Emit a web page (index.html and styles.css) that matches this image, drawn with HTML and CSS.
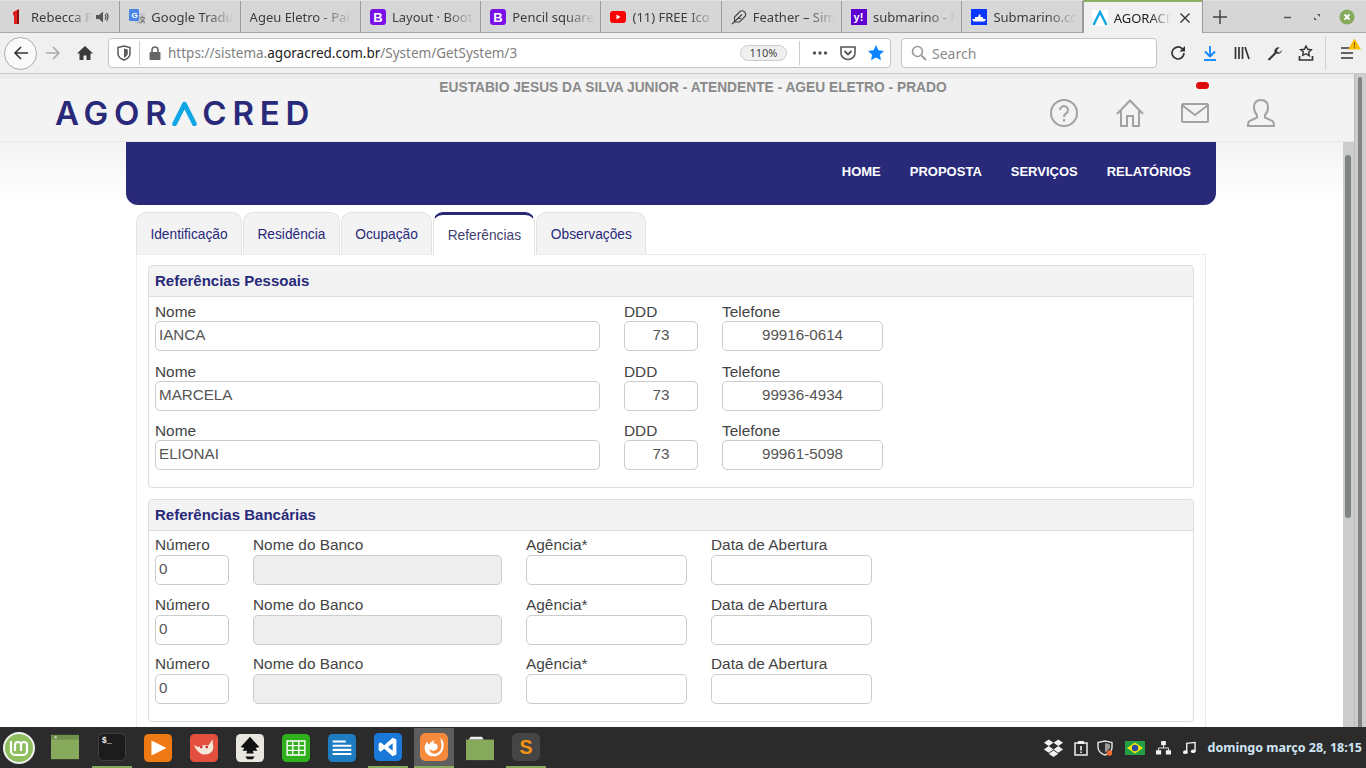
FILE: index.html
```html
<!DOCTYPE html>
<html lang="pt-BR">

<head>
    <meta charset="UTF-8">
    <title>AGORACRED</title>
    <link rel="stylesheet" href="styles.css">
</head>

<body>
    <div class="screen">
        <!-- abas do navegador -->
        <div class="tabstrip">
            <div class="tab">
                <svg class="fav" viewBox="0 0 16 16"><path d="M4 3l6-3v15H5V6l-1 .5z" fill="#e01f1f"/><path d="M8 1h2v14H8z" fill="#8c1010"/></svg>
                <span class="tab-title">Rebecca F</span>
                <svg class="tab-audio" viewBox="0 0 14 14"><path d="M1 5h3l4-3.500v11l-4-3.500H1z" fill="#555"/><path d="M10 4.500c1.200 1.500 1.200 3.500 0 5M11.500 3c2 2.200 2 5.800 0 8" fill="none" stroke="#555" stroke-width="1.200"/></svg>
            </div>
            <div class="tab">
                <svg class="fav" viewBox="0 0 16 16"><rect x="6" y="4" width="10" height="11" rx="1" fill="#c4c8cc"/><rect width="10" height="12" rx="1" fill="#4a86e8"/><text x="2.500" y="9" class="fav-g">G</text><text x="10" y="13" class="fav-z">文</text></svg>
                <span class="tab-title">Google Tradu</span>
            </div>
            <div class="tab">
                <span class="tab-title">Ageu Eletro - Pai</span>
            </div>
            <div class="tab">
                <svg class="fav" viewBox="0 0 16 16"><rect width="16" height="16" rx="3" fill="#7b10e8"/><text x="8" y="12.500" class="fav-b">B</text></svg>
                <span class="tab-title">Layout · Boot</span>
            </div>
            <div class="tab">
                <svg class="fav" viewBox="0 0 16 16"><rect width="16" height="16" rx="3" fill="#7b10e8"/><text x="8" y="12.500" class="fav-b">B</text></svg>
                <span class="tab-title">Pencil square</span>
            </div>
            <div class="tab">
                <svg class="fav" viewBox="0 0 16 16"><rect y="2" width="16" height="12" rx="3" fill="#f00"/><path d="M6.500 5.500l4 2.500-4 2.500z" fill="#fff"/></svg>
                <span class="tab-title">(11) FREE Ico</span>
            </div>
            <div class="tab">
                <svg class="fav" viewBox="0 0 16 16"><path d="M13.500 8a3.500 3.500 0 0 0-5-5L3.500 8v5h5zM11 5.500L1 15M10 9.500H6" fill="none" stroke="#444" stroke-width="1.100"/></svg>
                <span class="tab-title">Feather – Sim</span>
            </div>
            <div class="tab">
                <svg class="fav" viewBox="0 0 16 16"><rect width="16" height="16" fill="#5f01d1"/><text x="7.500" y="11.500" class="fav-y">y!</text></svg>
                <span class="tab-title">submarino - F</span>
            </div>
            <div class="tab">
                <svg class="fav" viewBox="0 0 16 16"><rect width="16" height="16" fill="#0a37ff"/><path d="M1 10h14l-1.500 2.500h-11zM4 10V8h3l1-2.500h1.500V8h2.500v2z" fill="#fff"/></svg>
                <span class="tab-title">Submarino.cc</span>
            </div>
            <div class="tab tab-active">
                <svg class="fav" viewBox="0 0 16 16"><rect width="16" height="16" fill="#fff"/><path d="M1.500 15L8 2l6.500 13" fill="none" stroke="#10a5e4" stroke-width="2.400"/></svg>
                <span class="tab-title">AGORACR</span>
                <svg class="tab-close" viewBox="0 0 12 12"><path d="M1.500 1.500l9 9M10.500 1.500l-9 9" stroke="#333" stroke-width="1.400"/></svg>
            </div>
            <svg class="tab-new" viewBox="0 0 14 14"><path d="M7 0v14M0 7h14" stroke="#444" stroke-width="1.500"/></svg>
            <div class="win-controls">
                <svg class="win-btn win-min" viewBox="0 0 10 10"><path d="M1 5.500h7" stroke="#555" stroke-width="1.500"/></svg>
                <svg class="win-btn" viewBox="0 0 10 10"><path d="M2 5v3h3zM8 5V2H5z" fill="#555"/></svg>
                <svg class="win-btn win-close" viewBox="0 0 16 16"><circle cx="8" cy="8" r="7.500" fill="#86aa5c"/><path d="M5.500 5.500l5 5M10.500 5.500l-5 5" stroke="#fff" stroke-width="1.800"/></svg>
            </div>
        </div>

        <!-- barra de ferramentas -->
        <div class="toolbar">
            <div class="btn-back">
                <svg class="ico" viewBox="0 0 16 16"><path d="M15 8H2M8 2L2 8l6 6" fill="none" stroke="#333" stroke-width="1.600"/></svg>
            </div>
            <svg class="ico ico-forward" viewBox="0 0 16 16"><path d="M1 8h13M8 2l6 6-6 6" fill="none" stroke="#aaa" stroke-width="1.600"/></svg>
            <svg class="ico ico-home" viewBox="0 0 16 16"><path d="M8 1L0 8.500h2.500V15h4v-4.500h3V15h4V8.500H16z" fill="#3a3a3a"/></svg>
            <div class="urlbar">
                <svg class="ico-url" viewBox="0 0 14 16"><path d="M1 2.500L7 1l6 1.500v6c0 3-3 5.500-6 6.500-3-1-6-3.500-6-6.500z" fill="none" stroke="#5a5a5a" stroke-width="1.500"/><path d="M7 3.500l3.800 1v4c0 1.800-1.800 3.300-3.800 4.200z" fill="#5a5a5a"/></svg>
                <span class="url-sep"></span>
                <svg class="ico-url" viewBox="0 0 14 16"><path d="M4 7V5a3 3 0 0 1 6 0v2" fill="none" stroke="#666" stroke-width="1.600"/><rect x="1.500" y="7" width="11" height="8" rx="1" fill="#666"/></svg>
                <span class="url-text">https://sistema.<b>agoracred.com.br</b>/System/GetSystem/3</span>
                <span class="url-zoom">110%</span>
                <span class="url-sep url-sep-wide"></span>
                <svg class="url-act" viewBox="0 0 16 16"><circle cx="2.500" cy="8" r="1.700" fill="#555"/><circle cx="8" cy="8" r="1.700" fill="#555"/><circle cx="13.500" cy="8" r="1.700" fill="#555"/></svg>
                <svg class="url-act" viewBox="0 0 16 16"><path d="M1 2h14v6a7 6.500 0 0 1-14 0z" fill="none" stroke="#555" stroke-width="1.600"/><path d="M4.500 6L8 9.500 11.500 6" fill="none" stroke="#555" stroke-width="1.800"/></svg>
                <svg class="url-act" viewBox="0 0 16 16"><path d="M8 0l2.400 5.200 5.600.7-4.100 3.800 1.100 5.600-5-2.800-5 2.800 1.100-5.600L0 5.900l5.600-.7z" fill="#0a84ff"/></svg>
            </div>
            <div class="searchbar">
                <svg class="ico-search" viewBox="0 0 16 16"><circle cx="6.500" cy="6.500" r="5" fill="none" stroke="#999" stroke-width="1.600"/><path d="M10.500 10.500L15 15" stroke="#999" stroke-width="1.800"/></svg>
                <span>Search</span>
            </div>
            <div class="tools">
                <svg class="ico" viewBox="0 0 16 16"><path d="M14 8a6 6 0 1 1-2-4.500L14 5" fill="none" stroke="#333" stroke-width="1.700"/><path d="M15 1v5.500H9.500z" fill="#333"/></svg>
                <svg class="ico" viewBox="0 0 16 16"><path d="M8 1v10M3 6.500L8 11.500l5-5" fill="none" stroke="#0a84ff" stroke-width="1.800"/><path d="M2 15h12" stroke="#0a84ff" stroke-width="1.800"/></svg>
                <svg class="ico" viewBox="0 0 16 16"><path d="M1.500 2v12M5 2v12M8.500 2v12M11 2l4 12" fill="none" stroke="#333" stroke-width="1.700"/></svg>
                <svg class="ico" viewBox="0 0 16 16"><path d="M1.500 14.500l7-7a4 4 0 0 1 5-5l-2.500 2.500.5 2 2 .5L16 5a4 4 0 0 1-5.500 3.500l-7 7z" fill="#3a3a3a"/></svg>
                <svg class="ico" viewBox="0 0 16 16"><path d="M8 1l1.700 3.300 3.600.5-2.600 2.500.6 3.500L8 8.700l-3.300 1.600.6-3.500L2.700 4.800l3.600-.5z" fill="none" stroke="#333" stroke-width="1.400"/><path d="M1.500 11v4h13v-4" fill="none" stroke="#333" stroke-width="1.700"/></svg>
                <span class="tools-sep"></span>
                <div class="menu-btn">
                    <svg class="ico" viewBox="0 0 16 16"><path d="M2 3h12M2 8h12M2 13h12" stroke="#333" stroke-width="1.600"/></svg>
                    <svg class="menu-alert" viewBox="0 0 14 12"><path d="M7 0l7 12H0z" fill="#ffbf00"/><path d="M7 4v4M7 9v1.500" stroke="#7a5a00" stroke-width="1.200"/></svg>
                </div>
            </div>
        </div>

        <!-- pagina -->
        <div class="page">
            <div class="page-main">
                <div class="page-strip"></div>
                <div class="page-header">
                    <div class="user-name">EUSTABIO JESUS DA SILVA JUNIOR - ATENDENTE - AGEU ELETRO - PRADO</div>
                    <div class="header-row">
                        <div class="logo">AGOR<span class="logo-a">A<svg class="logo-chevron" viewBox="0 0 24 24"><path d="M2.500 22L12 3l9.500 19" /></svg></span>CRED</div>
                        <div class="header-icons">
                            <svg class="hd-ico" viewBox="0 0 28 28"><circle cx="14" cy="14" r="13" /><path d="M10 11a4 4 0 1 1 6 3.500c-1.500.8-2 1.500-2 3.500" /><path d="M14 20v2.500" /></svg>
                            <svg class="hd-ico" viewBox="0 0 28 28"><path d="M1 15L14 1.500 27 15M5 12v15h6v-10h6v10h6V12" /></svg>
                            <div class="hd-mail">
                                <svg class="hd-ico" viewBox="0 0 28 28"><rect x="1" y="5" width="26" height="18" rx="1.500" /><path d="M1.500 6.500L14 16 26.500 6.500" /></svg>
                                <span class="mail-badge"></span>
                            </div>
                            <svg class="hd-ico" viewBox="0 0 28 28"><path d="M14 1c-4.500 0-7 3-7 7.500 0 3 1 5.500 3 7.500v2.500L2.500 22c-1.500 1-1.500 2.500-1.500 5h26c0-2.500 0-4-1.500-5L18 18.500V16c2-2 3-4.500 3-7.500C21 4 18.500 1 14 1z" /></svg>
                        </div>
                    </div>
                </div>
                <div class="page-body">
                    <div class="page-scroll">
                        <div class="container">
                            <nav class="mainnav">
                                <a>HOME</a>
                                <a>PROPOSTA</a>
                                <a>SERVIÇOS</a>
                                <a>RELATÓRIOS</a>
                            </nav>
                            <ul class="form-tabs">
                                <li>Identificação</li>
                                <li>Residência</li>
                                <li>Ocupação</li>
                                <li class="on">Referências</li>
                                <li>Observações</li>
                            </ul>
                            <div class="panel">
                                <section class="box">
                                    <h3 class="box-head">Referências Pessoais</h3>
                                    <div class="box-rows">
                                        <div class="row row-pessoal">
                                            <label>Nome<input type="text" value="IANCA"></label>
                                            <label>DDD<input class="mid" type="text" value="73"></label>
                                            <label>Telefone<input class="mid" type="text" value="99916-0614"></label>
                                        </div>
                                        <div class="row row-pessoal">
                                            <label>Nome<input type="text" value="MARCELA"></label>
                                            <label>DDD<input class="mid" type="text" value="73"></label>
                                            <label>Telefone<input class="mid" type="text" value="99936-4934"></label>
                                        </div>
                                        <div class="row row-pessoal">
                                            <label>Nome<input type="text" value="ELIONAI"></label>
                                            <label>DDD<input class="mid" type="text" value="73"></label>
                                            <label>Telefone<input class="mid" type="text" value="99961-5098"></label>
                                        </div>
                                    </div>
                                </section>
                                <section class="box">
                                    <h3 class="box-head">Referências Bancárias</h3>
                                    <div class="box-rows">
                                        <div class="row row-banco">
                                            <label>Número<input type="text" value="0"></label>
                                            <label>Nome do Banco<input type="text" disabled></label>
                                            <label>Agência*<input type="text"></label>
                                            <label>Data de Abertura<input type="text"></label>
                                        </div>
                                        <div class="row row-banco">
                                            <label>Número<input type="text" value="0"></label>
                                            <label>Nome do Banco<input type="text" disabled></label>
                                            <label>Agência*<input type="text"></label>
                                            <label>Data de Abertura<input type="text"></label>
                                        </div>
                                        <div class="row row-banco">
                                            <label>Número<input type="text" value="0"></label>
                                            <label>Nome do Banco<input type="text" disabled></label>
                                            <label>Agência*<input type="text"></label>
                                            <label>Data de Abertura<input type="text"></label>
                                        </div>
                                    </div>
                                </section>
                            </div>
                        </div>
                    </div>
                    <div class="track track-inner"><div class="thumb"></div></div>
                </div>
            </div>
            <div class="track track-outer"><div class="thumb"></div></div>
        </div>

        <!-- painel do sistema -->
        <div class="taskbar">
            <svg class="mint" viewBox="0 0 32 32"><circle cx="16" cy="16" r="15" fill="#8fbf5f" stroke="#f2f2f2" stroke-width="2"/><path d="M8 9v10a4 4 0 0 0 4 4h8a4 4 0 0 0 4-4v-6a3 3 0 0 0-6 0v6M12 19v-6a3 3 0 0 1 6 0" fill="none" stroke="#fff" stroke-width="2.200"/></svg>
            <div class="launchers">
                <div class="launcher">
                    <svg class="app app-win" viewBox="0 0 30 30"><rect y="1" width="30" height="26" fill="#87a95c"/><rect y="1" width="30" height="5" fill="#6f8f4a"/><rect x="4" y="2.500" width="2" height="2" fill="#ddd"/></svg>
                </div>
                <div class="launcher open">
                    <svg class="app" viewBox="0 0 30 30"><rect x=".5" y=".5" width="29" height="29" rx="5" fill="#1c1c1c" stroke="#444"/><text x="4" y="11" class="app-term">$_</text></svg>
                </div>
                <div class="launcher">
                    <svg class="app" viewBox="0 0 30 30"><rect width="30" height="30" rx="5" fill="#ef7a15"/><path d="M8 7l16 8-16 8z" fill="#fff"/></svg>
                </div>
                <div class="launcher">
                    <svg class="app" viewBox="0 0 30 30"><rect width="30" height="30" rx="5" fill="#e4503f"/><path d="M4 12l5 2 5-2 6 0 4-6 1 8c0 5-4 8-9 8s-8-3-12-10z" fill="#f5e6d8"/><circle cx="12" cy="14" r="1.500" fill="#c33"/><circle cx="18" cy="14" r="1.500" fill="#c33"/></svg>
                </div>
                <div class="launcher">
                    <svg class="app" viewBox="0 0 30 30"><rect width="30" height="30" rx="5" fill="#e9e6df"/><path d="M15 3L5 14l4 1-2 3h5l-1 3h8l-1-3h5l-2-3 4-1z" fill="#111"/><path d="M10 24h10l-2 3h-6z" fill="#111"/></svg>
                </div>
                <div class="launcher">
                    <svg class="app" viewBox="0 0 30 30"><rect width="30" height="30" rx="5" fill="#2fb01c"/><path d="M5.500 7.500h19v15h-19zM5.500 12.500h19M5.500 17.500h19M11.500 7.500v15M18 7.500v15" fill="none" stroke="#fff" stroke-width="1.500"/></svg>
                </div>
                <div class="launcher">
                    <svg class="app" viewBox="0 0 30 30"><rect width="30" height="30" rx="5" fill="#1d7dc0"/><path d="M5 8h14M5 12.500h20M5 17h20M5 21.500h20" stroke="#fff" stroke-width="2.200"/></svg>
                </div>
                <div class="launcher open">
                    <svg class="app" viewBox="0 0 30 30"><rect width="30" height="30" rx="5" fill="#1a78d8"/><path d="M20 5l4 2v16l-4 2-9-8-4 3-2-1.500v-7L7 10l4 3zM20 11l-5 4 5 4z" fill="#fff" fill-rule="evenodd"/></svg>
                </div>
                <div class="launcher open active">
                    <svg class="app" viewBox="0 0 30 30"><rect width="30" height="30" rx="6" fill="#f58a3c"/><path d="M22 5c3 3 4 6 3 11-1 6-6 9-11 9-5 0-9-4-9-9 0-3 1-5 3-7 0 2 1 3 2 3 1-2 3-4 6-4-1 1-2 2-2 3 3 0 5 1 5 4 0 2-2 4-5 4-2 0-3-1-4-2 0 3 3 6 7 5 4-1 6-4 6-8 0-3-1-6-1-9z" fill="#fff"/></svg>
                </div>
                <div class="launcher">
                    <svg class="app" viewBox="0 0 30 30"><path d="M0 6h30v22H0z" fill="#87a95c"/><path d="M3 6l2-3h12l2 3z" fill="#eee"/></svg>
                </div>
                <div class="launcher open">
                    <svg class="app" viewBox="0 0 30 30"><rect width="30" height="30" rx="6" fill="#454545"/><text x="15" y="23" class="app-sub">S</text></svg>
                </div>
            </div>
            <div class="tray">
                <svg class="tray-ico tray-drop" viewBox="0 0 22 20"><path d="M6 1l5 3.500L6 8 1 4.500zM16 1l5 3.500L16 8l-5-3.500zM6 8l5 3.500L6 15l-5-3.500zM16 8l5 3.500-5 3.500-5-3.500zM11 12.500l5 3.500-5 3.500L6 16z" fill="#f2f2f2"/></svg>
                <svg class="tray-ico tray-clip" viewBox="0 0 14 16"><path d="M1 3h12v12H1z" fill="none" stroke="#eee" stroke-width="1.500"/><rect x="4" y="1" width="6" height="3" fill="#eee"/><path d="M7 6v4.500M7 11.500V13" stroke="#eee" stroke-width="1.600"/></svg>
                <svg class="tray-ico tray-shield" viewBox="0 0 16 16"><path d="M1 2.500L8 1l7 1.500v5c0 3.500-3.500 6.500-7 7.500-3.500-1-7-4-7-7.500z" fill="none" stroke="#ddd" stroke-width="1.500"/><path d="M8 3l5 1.200V8L8 13z" fill="#999"/><circle cx="12.500" cy="13" r="2.700" fill="#f26a2e"/></svg>
                <svg class="tray-ico tray-flag" viewBox="0 0 20 14"><rect width="20" height="14" fill="#229e45"/><path d="M10 1.500L18 7l-8 5.500L2 7z" fill="#f8e509"/><circle cx="10" cy="7" r="3.200" fill="#2b49a3"/></svg>
                <svg class="tray-ico tray-net" viewBox="0 0 16 16"><path d="M5.500 1h5v4.500h-5zM0 11h5.500v4.500H0zM10.500 11H16v4.500h-5.500z" fill="#f2f2f2"/><path d="M8 5.500V8.500M2.700 11V8.500h10.600V11" fill="none" stroke="#f2f2f2"/></svg>
                <svg class="tray-ico tray-music" viewBox="0 0 14 14"><path d="M4 11.500V2l9-1v9.500" fill="none" stroke="#f2f2f2" stroke-width="1.500"/><ellipse cx="2.500" cy="11.500" rx="2.500" ry="2" fill="#f2f2f2"/><ellipse cx="11" cy="10.500" rx="2.500" ry="2" fill="#f2f2f2"/></svg>
                <span class="clock">domingo março 28, 18:15</span>
            </div>
        </div>
    </div>
</body>

</html>
```
FILE: styles.css
```css
* {
    box-sizing: border-box;
}

body {
    margin: 0;
    overflow: hidden;
}

.screen {
    width: 1366px;
    height: 768px;
    display: flex;
    flex-direction: column;
    font-family: "Noto Sans", sans-serif;
}

/* abas */
.tabstrip {
    height: 33px;
    flex: none;
    display: flex;
    align-items: stretch;
    background: #d6d6d6;
    border-top: 1px solid #e2e2e2;
    border-bottom: 1px solid #a8a8a8;
}

.tab {
    width: 120.3px;
    flex: none;
    display: flex;
    align-items: center;
    gap: 6px;
    padding-left: 9px;
    padding-right: 2px;
    border-right: 1px solid #9c9c9c;
    font-size: 13px;
    color: #3c3c3c;
}

.tab-title {
    flex: 1;
    min-width: 0;
    white-space: nowrap;
    overflow: hidden;
    -webkit-mask-image: linear-gradient(to right, #000 62%, transparent 96%);
    mask-image: linear-gradient(to right, #000 62%, transparent 96%);
}

.fav {
    width: 16px;
    height: 16px;
    flex: none;
}

.fav-g {
    font: bold 8px "Liberation Sans", sans-serif;
    fill: #fff;
}

.fav-z {
    font: 7px "Noto Sans CJK SC", sans-serif;
    fill: #555;
}

.fav-b {
    font: bold 13px "Liberation Sans", sans-serif;
    fill: #fff;
    text-anchor: middle;
}

.fav-y {
    font: bold 11px "Liberation Sans", sans-serif;
    fill: #fff;
    text-anchor: middle;
}

.tab-audio {
    width: 14px;
    height: 14px;
    flex: none;
    margin-left: -6px;
    margin-right: 8px;
}

.tab-active {
    margin-top: -1px;
    margin-bottom: -1px;
    background: #f0f0f0;
    border-top: 2px solid #8fae66;
    border-left: 1px solid #9c9c9c;
    color: #222;
    padding-left: 8px;
    padding-right: 11px;
    width: 120px;
}

.tab-close {
    width: 12px;
    height: 12px;
    flex: none;
}

.tab-new {
    width: 14px;
    height: 14px;
    align-self: center;
    margin-left: 10px;
}

.win-controls {
    margin-left: auto;
    display: flex;
    align-items: center;
    gap: 17px;
    padding-right: 11px;
}

.win-btn {
    width: 10px;
    height: 10px;
}

.win-min {
    margin-right: 2px;
}

.win-close {
    width: 16px;
    height: 16px;
}

/* barra */
.toolbar {
    height: 40px;
    flex: none;
    display: flex;
    align-items: center;
    background: #f0f0f0;
    padding-left: 4px;
}

.ico {
    width: 16px;
    height: 16px;
    flex: none;
}

.btn-back {
    width: 33px;
    height: 33px;
    border: 1px solid #aaa;
    border-radius: 50%;
    background: #fafafa;
    display: flex;
    align-items: center;
    justify-content: center;
}

.ico-forward {
    margin-left: 8px;
}

.ico-home {
    margin-left: 16px;
}

.urlbar {
    width: 783px;
    height: 30px;
    margin-left: 15px;
    display: flex;
    align-items: center;
    background: #fff;
    border: 1px solid #c4c4c4;
    border-radius: 4px;
    padding-left: 8px;
    padding-right: 6px;
}

.ico-url {
    width: 14px;
    height: 16px;
    flex: none;
}

.url-sep {
    width: 1px;
    height: 24px;
    background: #ccc;
    margin: 0 8px;
    flex: none;
}

.url-sep-wide {
    margin: 0 12px;
}

.url-text {
    flex: 1;
    margin-left: 6px;
    font-size: 13.5px;
    color: #808080;
    white-space: nowrap;
}

.url-text b {
    font-weight: normal;
    color: #222;
}

.url-zoom {
    width: 47px;
    height: 16px;
    border: 1px solid #ccc;
    border-radius: 8px;
    background: #f0f0f0;
    font-size: 11px;
    line-height: 14px;
    text-align: center;
    color: #444;
}

.url-act {
    width: 16px;
    height: 16px;
    margin-right: 12px;
    flex: none;
}

.url-act:last-child {
    margin-right: 0;
}

.searchbar {
    width: 256px;
    height: 30px;
    margin-left: 10px;
    display: flex;
    align-items: center;
    gap: 5px;
    background: #fff;
    border: 1px solid #c4c4c4;
    border-radius: 4px;
    padding-left: 9px;
    font-size: 14px;
    color: #8a8a8a;
}

.ico-search {
    width: 16px;
    height: 16px;
}

.tools {
    display: flex;
    align-items: center;
    gap: 16px;
    margin-left: 13px;
}

.tools-sep {
    width: 1px;
    height: 34px;
    background: #d4d4d4;
    margin-left: -5px;
    margin-right: -3px;
}

.menu-btn {
    position: relative;
    display: flex;
}

.menu-alert {
    position: absolute;
    left: 9px;
    top: -7px;
    width: 13px;
    height: 12px;
}

/* pagina */
.page {
    flex: 1;
    min-height: 0;
    display: flex;
    overflow: hidden;
    border-top: 1px solid #c8c8c8;
    font-family: "Liberation Sans", Arial, sans-serif;
}

.page-main {
    width: 1354px;
    flex: none;
    display: flex;
    flex-direction: column;
    min-height: 0;
}

.page-strip {
    height: 5px;
    flex: none;
    background: #ececec;
}

.page-header {
    height: 63px;
    flex: none;
    background: #f3f3f3;
    border-bottom: 1px solid #e8e8e8;
}

.user-name {
    height: 16px;
    padding-top: 1px;
    padding-left: 32px;
    text-align: center;
    font-size: 13.75px;
    font-weight: bold;
    line-height: 16px;
    color: #8a8a8a;
}

.header-row {
    display: flex;
    align-items: flex-start;
    justify-content: space-between;
    padding: 0 79px 0 55px;
}

.logo {
    font-family: Inter, sans-serif;
    font-size: 33px;
    font-weight: 600;
    line-height: 34px;
    letter-spacing: 5.8px;
    color: #29297a;
    margin-top: 1px;
}

.logo-a {
    position: relative;
    color: transparent;
}

.logo-chevron {
    position: absolute;
    left: -1px;
    top: 8px;
    width: 25px;
    height: 25px;
    fill: none;
    stroke: #10a5e4;
    stroke-width: 4.5;
    stroke-linecap: round;
    stroke-linejoin: round;
}

.header-icons {
    display: flex;
    gap: 37.7px;
    padding-top: 4px;
}

.hd-ico {
    width: 28px;
    height: 28px;
    display: block;
    fill: none;
    stroke: #a2a2a2;
    stroke-width: 2;
}

.hd-mail {
    position: relative;
}

.mail-badge {
    position: absolute;
    left: 15px;
    top: -17px;
    width: 13px;
    height: 7px;
    border-radius: 4px;
    background: #dc0a0a;
}

.page-body {
    flex: 1;
    min-height: 0;
    display: flex;
}

.page-scroll {
    width: 1343px;
    flex: none;
    overflow: hidden;
    background: linear-gradient(#f3f3f3, #fff 60px);
}

.track {
    background: #cccccc;
}

.thumb {
    background: #7f8484;
    border-radius: 3px;
}

.track-inner {
    width: 11px;
    flex: none;
    padding: 13px 3px 0 2px;
}

.track-inner .thumb {
    height: 363px;
}

.track-outer {
    width: 12px;
    flex: none;
    padding: 3px 4px 0 3px;
    border-left: 1px solid #bdbdbd;
}

.track-outer .thumb {
    height: 700px;
}

.container {
    width: 1090px;
    margin-left: 126px;
}

.mainnav {
    height: 63px;
    display: flex;
    align-items: center;
    justify-content: flex-end;
    gap: 29px;
    padding: 0 25px 5px 0;
    background: #29297a;
    border-radius: 0 0 12px 12px;
}

.mainnav a {
    font-size: 13px;
    font-weight: bold;
    color: #fff;
}

.form-tabs {
    display: flex;
    gap: 1px;
    list-style: none;
    margin: 7px 0 0 10px;
    padding: 0;
    height: 42px;
}

.form-tabs li {
    padding: 13px 13.4px 0;
    background: #f3f3f3;
    border: 1px solid #e3e3e3;
    border-bottom: 0;
    border-radius: 10px 10px 0 0;
    font-size: 13.75px;
    line-height: 17px;
    color: #29297a;
}

.form-tabs li.on {
    height: 43px;
    position: relative;
    z-index: 1;
    background: #fff;
    border-top: 3px solid #29297a;
    color: #3f3f6f;
    padding-top: 12px;
}

.panel {
    margin: 0 10px;
    padding: 10px 11px;
    background: #fff;
    border: 1px solid #ececec;
}

.box {
    border: 1px solid #ddd;
    border-radius: 4px;
    margin-bottom: 11px;
}

.box-head {
    height: 31px;
    margin: 0;
    padding-left: 6px;
    background: #f3f3f3;
    border-bottom: 1px solid #ddd;
    border-radius: 4px 4px 0 0;
    font-size: 15px;
    line-height: 30px;
    color: #29297a;
}

.box-rows {
    display: flex;
    flex-direction: column;
    gap: 12.5px;
    padding: 7px 6px 17px;
}

.row {
    display: grid;
    column-gap: 24px;
}

.row-pessoal {
    grid-template-columns: 445px 74px 161px;
}

.row-banco {
    grid-template-columns: 74px 249px 161px 161px;
}

.row label {
    display: block;
    font-size: 15.4px;
    line-height: 15px;
    color: #444;
}

.row-banco label {
    line-height: 14px;
}

.row input {
    display: block;
    width: 100%;
    height: 30px;
    margin-top: 2px;
    padding: 0 3px 3px;
    border: 1px solid #ccc;
    border-radius: 5px;
    background: #fff;
    font: 15.2px "Liberation Sans", Arial, sans-serif;
    color: #555;
}

.row-banco input {
    margin-top: 3px;
}

.row input.mid {
    text-align: center;
}

.row input:disabled {
    background: #eeeeee;
}

/* painel */
.taskbar {
    height: 41px;
    flex: none;
    display: flex;
    background: #2b2b2b;
}

.mint {
    width: 32px;
    height: 32px;
    margin: 5px 0 0 3px;
    flex: none;
}

.launchers {
    display: flex;
    gap: 6px;
    margin-left: 11px;
}

.launcher {
    width: 40px;
    display: flex;
    align-items: center;
    justify-content: center;
    margin-top: 1px;
}

.launcher.open {
    border-bottom: 2px solid #87a95c;
}

.launcher.active {
    background: #5e5e5e;
}

.app {
    width: 28px;
    height: 28px;
}

.app-win {
    margin-right: 3px;
}

.app-term {
    font: bold 9px "Liberation Mono", monospace;
    fill: #eee;
}

.app-sub {
    font: bold 21px "Liberation Sans", sans-serif;
    fill: #f4930e;
    text-anchor: middle;
}

.tray {
    margin-left: auto;
    display: flex;
    align-items: center;
    padding-right: 4px;
}

.tray-ico {
    flex: none;
}

.tray-drop {
    width: 21px;
    height: 20px;
}

.tray-clip {
    width: 14px;
    height: 16px;
    margin-left: 10px;
}

.tray-shield {
    width: 16px;
    height: 16px;
    margin-left: 9px;
}

.tray-flag {
    width: 20px;
    height: 14px;
    margin-left: 12px;
}

.tray-net {
    width: 15px;
    height: 15px;
    margin-left: 11px;
}

.tray-music {
    width: 13px;
    height: 14px;
    margin-left: 12px;
}

.clock {
    margin-left: 12px;
    font-size: 12.5px;
    font-weight: bold;
    color: #cfe4f4;
    white-space: nowrap;
}
```
